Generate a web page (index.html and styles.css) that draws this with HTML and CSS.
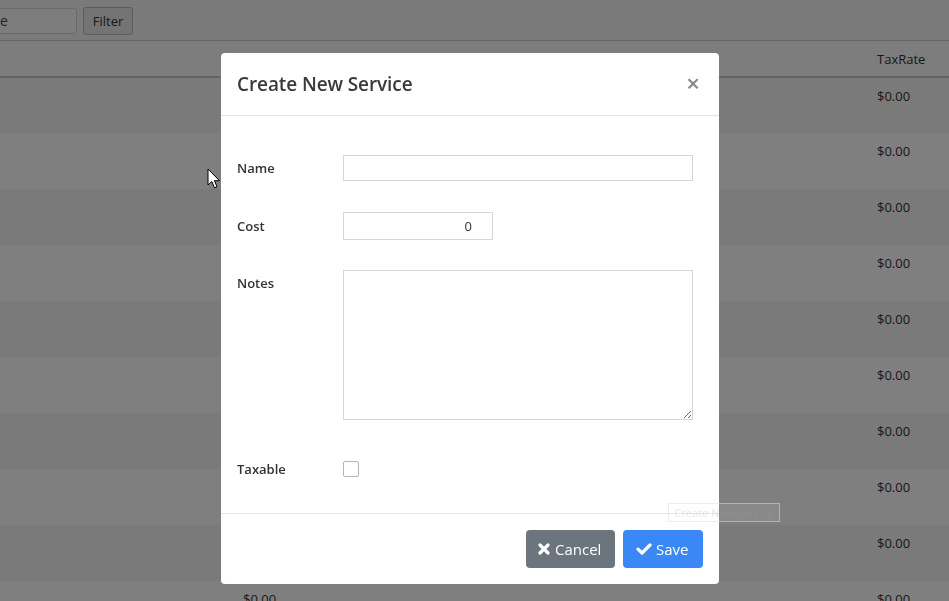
FILE: index.html
```html
<!DOCTYPE html>
<html>
<head>
<meta charset="utf-8">
<link rel="stylesheet" href="styles.css">
</head>
<body>
<div class="page">
  <div class="toolbar">
    <div class="search">e</div>
    <button class="filter-btn">Filter</button>
  </div>
  <table class="grid">
    <thead>
      <tr><th class="c1"></th><th class="c2"></th><th class="c3"></th><th class="c4">TaxRate</th></tr>
    </thead>
    <tbody>
      <tr class="odd"><td></td><td>$0.00</td><td></td><td>$0.00</td></tr>
      <tr><td></td><td>$0.00</td><td></td><td>$0.00</td></tr>
      <tr class="odd"><td></td><td>$0.00</td><td></td><td>$0.00</td></tr>
      <tr><td></td><td>$0.00</td><td></td><td>$0.00</td></tr>
      <tr class="odd"><td></td><td>$0.00</td><td></td><td>$0.00</td></tr>
      <tr><td></td><td>$0.00</td><td></td><td>$0.00</td></tr>
      <tr class="odd"><td></td><td>$0.00</td><td></td><td>$0.00</td></tr>
      <tr><td></td><td>$0.00</td><td></td><td>$0.00</td></tr>
      <tr class="odd"><td></td><td>$0.00</td><td></td><td>$0.00</td></tr>
      <tr><td></td><td>$0.00</td><td></td><td>$0.00</td></tr>
    </tbody>
  </table>
</div>

<div class="backdrop"></div>

<div class="modal">
  <div class="modal-header">
    <h5 class="modal-title">Create New Service</h5>
    <span class="close">&times;</span>
  </div>
  <div class="modal-body">
    <div class="row row-name">
      <label class="lbl">Name</label>
      <input class="field field-wide" type="text">
    </div>
    <div class="row row-cost">
      <label class="lbl">Cost</label>
      <input class="field field-cost" type="text" value="0">
    </div>
    <div class="row row-notes">
      <label class="lbl lbl-top">Notes</label>
      <textarea class="field notes"></textarea>
    </div>
    <div class="row row-tax">
      <label class="lbl">Taxable</label>
      <span class="check"></span>
    </div>
  </div>
  <div class="modal-footer">
    <button class="btn btn-cancel">
      <svg class="ico-x" viewBox="0 0 12 12" width="12" height="12"><path d="M2 2 L10 10 M10 2 L2 10" stroke="#fff" stroke-width="3.2" stroke-linecap="round" fill="none"/></svg>
      Cancel
    </button>
    <button class="btn btn-save">
      <svg class="ico-check" viewBox="0 0 16 12" width="16" height="12"><path d="M2 6.2 L6 10 L14 2" stroke="#fff" stroke-width="3.2" stroke-linecap="round" stroke-linejoin="round" fill="none"/></svg>
      Save
    </button>
  </div>
</div>

<div class="tooltip">Create New Service</div>

<svg class="cursor" width="14" height="22" viewBox="0 0 14 22"><path d="M1 1 L1 17 L4.8 13.5 L7.5 19.8 L10 18.8 L7.4 12.7 L12.5 12.7 Z" fill="#fff" stroke="#000" stroke-width="1" stroke-linejoin="round"/></svg>
</body>
</html>
```
FILE: styles.css
```css
* { box-sizing: border-box; }
html, body { margin: 0; padding: 0; }
body {
  font-family: "Open Sans", "Noto Sans", sans-serif;
  font-size: 13px;
  color: #333;
  background: #fff;
  width: 949px;
  height: 601px;
  overflow: hidden;
}
.page { width: 949px; }
.toolbar {
  height: 41px;
  background: #f4f4f4;
  border-bottom: 1px solid #ccc;
  display: flex;
  align-items: flex-start;
  padding-top: 7px;
}
.search {
  margin-left: -12px;
  margin-top: 1px;
  width: 89px;
  height: 26px;
  border: 1px solid #d4d4d4;
  background: #fbfbfb;
  border-radius: 3px;
  padding-left: 11px;
  font-size: 14px;
  line-height: 24px;
  color: #444;
}
.filter-btn {
  margin-left: 6px;
  width: 50px;
  height: 28px;
  border: 1px solid #b8b8b8;
  border-radius: 3px;
  background: #e8e8e8;
  font-family: "Open Sans", sans-serif;
  font-size: 13px;
  color: #333;
  padding: 0;
}
.grid {
  border-collapse: collapse;
  width: 949px;
  table-layout: fixed;
}
.grid th {
  height: 36px;
  background: #fafafa;
  border-bottom: 2px solid #c8c8c8;
  font-weight: 400;
  font-size: 13px;
  text-align: left;
  vertical-align: middle;
  padding: 0;
  color: #333;
}
.grid .c1 { width: 243px; }
.grid .c2 { width: 300px; }
.grid .c3 { width: 334px; }
.grid .c4 { width: 72px; }
.grid td {
  height: 56px;
  padding: 9px 0 0 0;
  vertical-align: top;
  font-size: 13px;
  color: #333;
}
.grid tr.odd td { background: #f4f4f4; }

.backdrop {
  position: fixed;
  inset: 0;
  background: rgba(0, 0, 0, 0.5);
}

.modal {
  position: fixed;
  left: 221px;
  top: 53px;
  width: 498px;
  height: 531px;
  background: #fff;
  border-radius: 4px;
  display: flex;
  flex-direction: column;
  overflow: hidden;
}
.modal-header {
  height: 63px;
  border-bottom: 1px solid #e6e6e6;
  display: flex;
  align-items: center;
  justify-content: space-between;
  padding: 0 19px 0 16px;
}
.modal-title {
  margin: 0;
  font-size: 19px;
  font-weight: 600;
  color: #3a3a3a;
  letter-spacing: -0.1px;
}
.close {
  font-size: 24px;
  font-weight: 600;
  color: #888;
  line-height: 1;
  margin-top: -2px;
}
.modal-body {
  flex: 1;
  padding: 39px 26px 0 16px;
  display: flex;
  flex-direction: column;
}
.row {
  display: flex;
  align-items: center;
}
.lbl {
  width: 106px;
  font-size: 13px;
  font-weight: 600;
  color: #333;
}
.lbl-top { align-self: flex-start; padding-top: 4px; }
.row-cost { margin-top: 31px; }
.row-notes { margin-top: 30px; }
.row-tax { margin-top: 36px; height: 26px; }
.field {
  border: 1px solid #d6d6d6;
  background: #fff;
  font-family: "Open Sans", sans-serif;
  font-size: 13px;
  color: #333;
  outline: none;
  margin: 0;
}
.field-wide { width: 350px; height: 26px; }
.field-cost {
  width: 150px;
  height: 28px;
  text-align: right;
  padding-right: 20px;
}
.notes {
  width: 350px;
  height: 150px;
  resize: vertical;
  display: block;
}
.check {
  display: block;
  width: 16px;
  height: 16px;
  border: 1px solid #b5b5b5;
  border-radius: 2px;
  background: #fff;
}
.modal-footer {
  height: 71px;
  border-top: 1px solid #e6e6e6;
  display: flex;
  align-items: center;
  justify-content: flex-end;
  gap: 8px;
  padding: 0 16px;
}
.btn {
  height: 38px;
  border: none;
  border-radius: 4px;
  color: #fff;
  font-family: "Open Sans", sans-serif;
  font-size: 15px;
  display: flex;
  align-items: center;
  gap: 5px;
  padding: 0 12px;
}
.btn-cancel { background: #6c757d; width: 89px; }
.btn-save { background: #3a87f6; width: 80px; padding-left: 13px; gap: 4px; }

.tooltip {
  position: fixed;
  left: 668px;
  top: 503px;
  width: 112px;
  height: 19px;
  background: rgba(255, 255, 255, 0.08);
  border: 1px solid rgba(220, 220, 220, 0.5);
  color: rgba(160, 160, 160, 0.25);
  font-size: 11px;
  line-height: 17px;
  text-align: center;
  white-space: nowrap;
}
.cursor {
  position: fixed;
  left: 207px;
  top: 168px;
}
```
